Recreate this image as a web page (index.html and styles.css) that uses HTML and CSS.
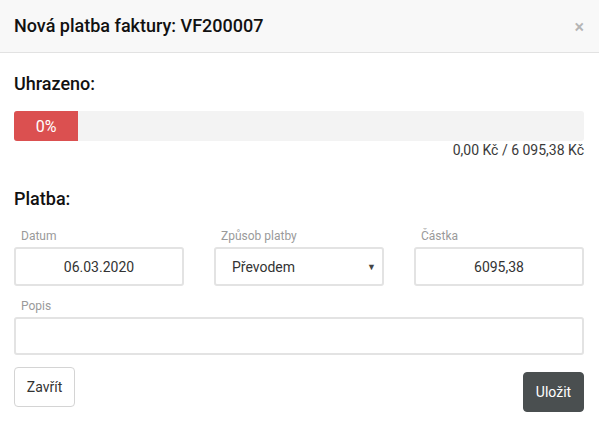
FILE: index.html
```html
<!DOCTYPE html>
<html lang="cs">
<head>
<meta charset="utf-8">
<link rel="stylesheet" href="styles.css">
</head>
<body>
<div class="modal">
  <div class="modal-header">
    <h1 class="modal-title">Nová platba faktury: VF200007</h1>
    <span class="close">×</span>
  </div>
  <div class="modal-body">
    <h2 class="section-title">Uhrazeno:</h2>
    <div class="progress">
      <div class="progress-bar" style="width: 64px;">0%</div>
    </div>
    <div class="amounts">0,00 Kč / 6 095,38 Kč</div>
    <h2 class="section-title platba">Platba:</h2>
    <div class="row">
      <div class="field">
        <label class="label">Datum</label>
        <div class="input center">06.03.2020</div>
      </div>
      <div class="field">
        <label class="label">Způsob platby</label>
        <div class="input select"><span>Převodem</span><span class="caret">▼</span></div>
      </div>
      <div class="field">
        <label class="label">Částka</label>
        <div class="input center">6095,38</div>
      </div>
    </div>
    <div class="field full">
      <label class="label">Popis</label>
      <div class="input"></div>
    </div>
    <div class="actions">
      <button class="btn btn-default">Zavřít</button>
      <button class="btn btn-dark">Uložit</button>
    </div>
  </div>
</div>
</body>
</html>
```
FILE: styles.css
```css
html, body {
  margin: 0;
  padding: 0;
  background: #ffffff;
  font-family: Roboto, "Liberation Sans", sans-serif;
  color: #212529;
}
.modal {
  width: 599px;
  height: 422px;
  overflow: hidden;
}
.modal-header {
  height: 53px;
  box-sizing: border-box;
  background: #f8f8f8;
  border-bottom: 1px solid #e2e2e2;
  display: flex;
  align-items: center;
  justify-content: space-between;
  padding: 0 15px 0 14px;
}
.modal-title {
  margin: 0;
  font-size: 18px;
  font-weight: 500;
  color: #111;
  position: relative;
  top: -1px;
}
.close {
  font-size: 18px;
  color: #b5b5b5;
  font-weight: 500;
  line-height: 1;
  position: relative;
  top: 1px;
}
.modal-body {
  padding: 20px 15px 0 14px;
}
.section-title {
  margin: 0;
  font-size: 18px;
  font-weight: 500;
  color: #111;
  line-height: 22px;
}
.progress {
  margin-top: 16px;
  height: 30px;
  background: #f3f3f3;
  border-radius: 3px;
  overflow: hidden;
  display: flex;
}
.progress-bar {
  background: #db5050;
  color: #fff;
  font-size: 16px;
  display: flex;
  align-items: center;
  justify-content: center;
  height: 100%;
}
.amounts {
  text-align: right;
  font-size: 14px;
  color: #3a3a3a;
  margin-top: 1px;
  line-height: 16px;
}
.platba {
  margin-top: 30px;
}
.row {
  display: grid;
  grid-template-columns: 170px 170px 170px;
  column-gap: 30px;
  margin-top: 19px;
}
.field {
  display: flex;
  flex-direction: column;
}
.label {
  font-size: 12px;
  color: #9a9a9a;
  padding-left: 7px;
  line-height: 14px;
  margin-bottom: 4px;
}
.input {
  height: 39px;
  box-sizing: border-box;
  border: 2px solid #e3e3e3;
  border-radius: 3px;
  font-size: 14px;
  color: #333;
  display: flex;
  align-items: center;
  background: #fff;
}
.input.center {
  justify-content: center;
}
.input.select {
  justify-content: space-between;
  padding: 0 6px 0 16px;
}
.caret {
  font-size: 9px;
  color: #444;
}
.full {
  margin-top: 13px;
  width: 570px;
}
.full .input {
  height: 38px;
}
.actions {
  display: flex;
  justify-content: space-between;
  width: 570px;
  margin-top: 12px;
}
.btn {
  font-family: Roboto, "Liberation Sans", sans-serif;
  font-size: 14px;
  height: 40px;
  padding: 0 11px;
  border-radius: 4px;
  cursor: pointer;
}
.btn-default {
  background: #fff;
  border: 1px solid #d4d4d4;
  color: #333;
  width: 61px;
}
.btn-dark {
  background: #4a4f50;
  border: 1px solid #4a4f50;
  color: #fff;
  width: 61px;
  margin-top: 5px;
}
```
